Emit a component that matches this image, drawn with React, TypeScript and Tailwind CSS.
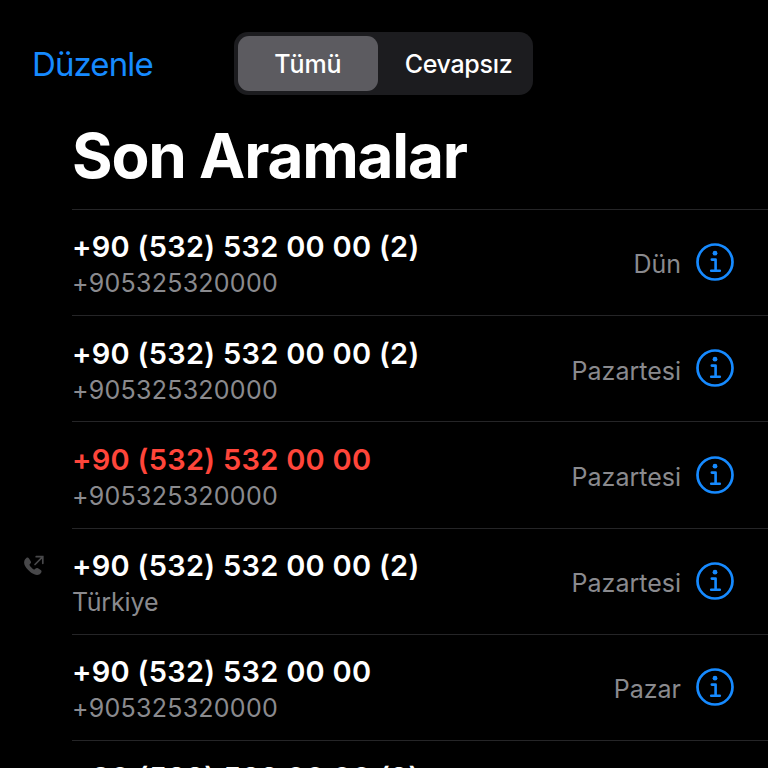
import clsx from 'clsx';

interface Call {
  title: string;
  subtitle?: string;
  when?: string;
  missed?: boolean;
  outgoing?: boolean;
}

const calls: Call[] = [
  { title: '+90 (532) 532 00 00 (2)', subtitle: '+905325320000', when: 'Dün' },
  { title: '+90 (532) 532 00 00 (2)', subtitle: '+905325320000', when: 'Pazartesi' },
  { title: '+90 (532) 532 00 00', subtitle: '+905325320000', when: 'Pazartesi', missed: true },
  { title: '+90 (532) 532 00 00 (2)', subtitle: 'Türkiye', when: 'Pazartesi', outgoing: true },
  { title: '+90 (532) 532 00 00', subtitle: '+905325320000', when: 'Pazar' },
  { title: '+90 (532) 532 00 00 (2)' },
];

function InfoIcon() {
  return (
    <svg viewBox="0 0 38 38" className="h-[38px] w-[38px]" fill="none" stroke="#168aff">
      <circle cx="19" cy="19" r="17.5" strokeWidth="2.7" />
      <circle cx="19" cy="10.2" r="2.4" fill="#168aff" stroke="none" />
      <path d="M15.8 16.6h3.8v10.7M15.2 27.8h8.6" strokeWidth="2.6" strokeLinecap="round" strokeLinejoin="round" />
    </svg>
  );
}

function OutgoingIcon() {
  return (
    <svg viewBox="0 0 22 22" className="h-[22px] w-[22px]">
      <path
        d="M3.4 3c.8-.7 1.9-.5 2.6.5l1.7 2.7c.6.9.4 1.6-.3 2.3l-.7.7c-.3.3-.3.6-.1 1 .9 1.6 2.6 3.3 4.2 4.2.4.2.7.2 1-.1l.8-.8c.7-.7 1.5-.8 2.4-.2l2.7 1.8c1 .7 1.1 1.7.4 2.6-1.5 2.2-3.9 2.9-6.9 1.6C7.2 17.6 3.2 13.6 1.5 9.7.6 7 1.4 4.4 3.4 3z"
        fill="#48484a"
      />
      <path d="M12 9.5 19.3 2.2M13.2 1.7h6.6v6.6" fill="none" stroke="#48484a" strokeWidth="1.7" strokeLinecap="round" />
    </svg>
  );
}

function CallRow({ call }: { call: Call }) {
  return (
    <li className="flex h-[106.2px] shrink-0">
      <div className="flex w-[72px] shrink-0 pt-[27px] pl-[23px]">{call.outgoing && <OutgoingIcon />}</div>
      <div className="flex flex-1 border-t border-[#252527]">
        <div className="flex-1 pt-[18.4px]">
          <p
            className={clsx(
              'text-[29px] leading-[38px] font-semibold tracking-[0.28px] whitespace-nowrap',
              call.missed ? 'text-[#ff453a]' : 'text-white',
            )}
          >
            {call.title}
          </p>
          {call.subtitle && (
            <p
              className={clsx(
                'text-[25px] leading-[34px] text-[#8a8a8e]',
                call.subtitle.startsWith('+') ? 'tracking-[0.25px]' : 'tracking-[-0.15px]',
              )}
            >
              {call.subtitle}
            </p>
          )}
        </div>
        {call.when && (
          <>
            <span className="pt-[37.4px] text-[25px] leading-[34px] text-[#8a8a8e]">{call.when}</span>
            <button className="mt-[33.3px] mr-[34px] ml-[15px] h-[38px]" aria-label="Bilgi">
              <InfoIcon />
            </button>
          </>
        )}
      </div>
    </li>
  );
}

export default function App() {
  return (
    <div className="flex h-[768px] w-[768px] flex-col overflow-hidden bg-black font-['Inter',sans-serif]">
      <header className="flex h-[95px] shrink-0 pt-8">
        <button className="w-[234px] pt-0.5 pl-8 text-left text-[33px] tracking-[-0.9px] text-[#168aff]">Düzenle</button>
        <div className="flex h-[63px] w-[299px] rounded-[14px] bg-[#1c1c1f] p-1">
          <button className="w-[140px] rounded-[11px] bg-[#5c5b60] pt-0.5 text-[25px] font-medium text-white">Tümü</button>
          <button className="flex-1 pt-0.5 pl-[10px] text-[25px] font-medium tracking-[-0.3px] text-white">Cevapsız</button>
        </div>
      </header>
      <h1 className="h-[114px] shrink-0 pt-[25px] pl-[72px] text-[62px] leading-[72px] font-bold tracking-[-1.2px] text-white">
        Son Aramalar
      </h1>
      <ul>
        {calls.map((call, i) => (
          <CallRow key={i} call={call} />
        ))}
      </ul>
    </div>
  );
}
